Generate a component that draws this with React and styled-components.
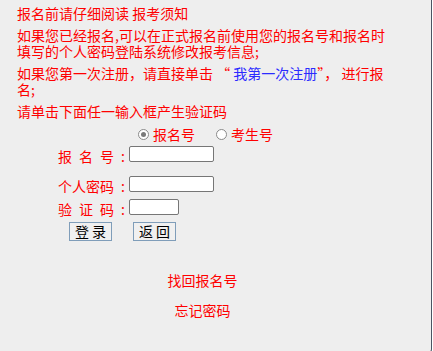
import styled, { createGlobalStyle } from "styled-components";

const GlobalStyle = createGlobalStyle`
  html, body {
    margin: 0;
    padding: 0;
    background: #ffffff;
  }
  body {
    font-family: "Noto Sans CJK SC", "Noto Sans", sans-serif;
  }
`;

const Panel = styled.div`
  box-sizing: border-box;
  width: 432px;
  height: 353px;
  background: #eeeeee;
  border-right: 1px solid #4b5463;
  border-bottom: 1px solid #4b5463;
  border-bottom-right-radius: 4px;
  padding: 5px 0 0 17px;
  color: #ff0000;
  font-size: 14px;
  overflow: hidden;
`;

const Notice = styled.div`
  width: 372px;
  display: flex;
  flex-direction: column;
  gap: 6px;
`;

const Para = styled.p`
  margin: 0;
  line-height: 16px;
`;

const Blue = styled.span`
  color: #2b2bff;
`;

const RadioRow = styled.div`
  display: flex;
  align-items: center;
  height: 16px;
  margin: 7px 0 0 121px;
  gap: 21px;
`;

const RadioItem = styled.label`
  display: flex;
  align-items: center;
  gap: 4px;
  line-height: 16px;
`;

const Dot = styled.span`
  box-sizing: border-box;
  width: 11px;
  height: 11px;
  border-radius: 50%;
  border: 1px solid #8a8a8a;
  background: #ffffff;
  display: flex;
  align-items: center;
  justify-content: center;
  &::after {
    content: "";
    width: 5px;
    height: 5px;
    border-radius: 50%;
    background: ${({ checked }) => (checked ? "#7a7a7a" : "transparent")};
  }
`;

const Form = styled.div`
  display: flex;
  flex-direction: column;
  margin-top: 4px;
`;

const Row = styled.div`
  display: flex;
  align-items: flex-start;
  height: 16px;
  margin-top: ${({ top }) => top}px;
`;

const Label = styled.span`
  box-sizing: border-box;
  width: 112px;
  display: flex;
  justify-content: space-between;
  padding: 2px 4px 0 41px;
  line-height: 16px;
  white-space: nowrap;
`;

const Chars = styled.span`
  width: 56px;
  text-align: justify;
  text-align-last: justify;
`;

const Colon = styled.span``;

const Input = styled.input`
  box-sizing: border-box;
  width: ${({ w }) => w}px;
  height: 16px;
  margin: 0;
  padding: 0 2px;
  border: 1px solid #767676;
  border-radius: 2px;
  background: #ffffff;
  font-size: 12px;
`;

const Buttons = styled.div`
  display: flex;
  gap: 21px;
  margin: 7px 0 0 52px;
`;

const Button = styled.button`
  box-sizing: border-box;
  width: 43px;
  height: 19px;
  margin: 0;
  padding: 0;
  border: 1px solid #7f9db9;
  background: #f0f0f0;
  color: #000000;
  font-family: "Noto Sans CJK SC", sans-serif;
  font-size: 14px;
  line-height: 17px;
  letter-spacing: 3px;
  text-indent: 3px;
`;

const Links = styled.div`
  width: 371px;
  display: flex;
  flex-direction: column;
  align-items: center;
  gap: 14px;
  margin-top: 31px;
`;

const TextLink = styled.span`
  line-height: 16px;
  cursor: pointer;
`;

export default function App() {
  return (
    <>
      <GlobalStyle />
      <Panel>
        <Notice>
          <Para>报名前请仔细阅读 报考须知</Para>
          <Para>如果您已经报名,可以在正式报名前使用您的报名号和报名时填写的个人密码登陆系统修改报考信息;</Para>
          <Para>
            如果您第一次注册，请直接单击 “ <Blue>我第一次注册</Blue>”， 进行报名;
          </Para>
          <Para>请单击下面任一输入框产生验证码</Para>
        </Notice>
        <RadioRow>
          <RadioItem>
            <Dot checked />
            报名号
          </RadioItem>
          <RadioItem>
            <Dot />
            考生号
          </RadioItem>
        </RadioRow>
        <Form>
          <Row top={0}>
            <Label>
              <Chars>报名号</Chars>
              <Colon>:</Colon>
            </Label>
            <Input w={85} />
          </Row>
          <Row top={14}>
            <Label>
              <Chars>个人密码</Chars>
              <Colon>:</Colon>
            </Label>
            <Input w={85} />
          </Row>
          <Row top={7}>
            <Label>
              <Chars>验证码</Chars>
              <Colon>:</Colon>
            </Label>
            <Input w={50} />
          </Row>
        </Form>
        <Buttons>
          <Button>登录</Button>
          <Button>返回</Button>
        </Buttons>
        <Links>
          <TextLink>找回报名号</TextLink>
          <TextLink>忘记密码</TextLink>
        </Links>
      </Panel>
    </>
  );
}
